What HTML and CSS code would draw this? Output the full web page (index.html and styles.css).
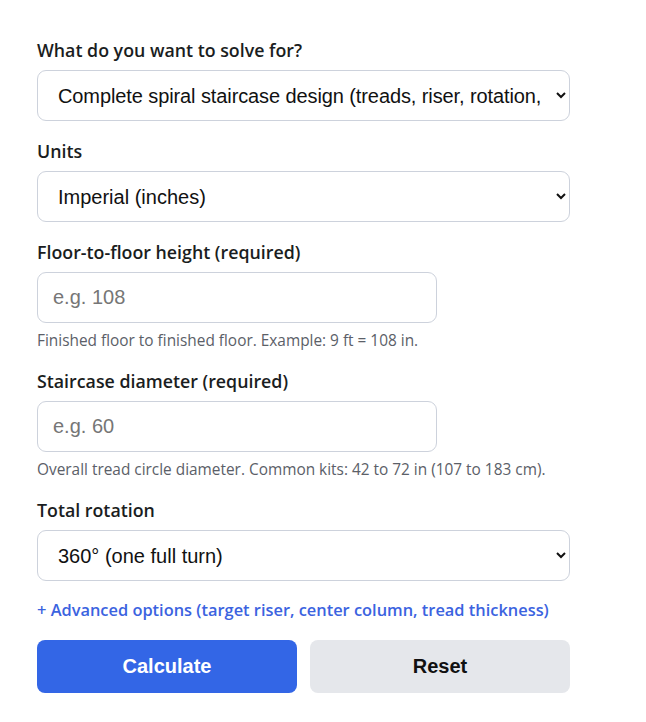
FILE: index.html
```html
<!DOCTYPE html>
<html lang="en">
<head>
<meta charset="utf-8">
<title>Spiral Staircase Calculator</title>
<link rel="stylesheet" href="styles.css">
</head>
<body>
<form class="calc" onsubmit="return false">
  <div class="field">
    <label class="label" for="solve">What do you want to solve for?</label>
    <select id="solve" class="control select select-long">
      <option>Complete spiral staircase design (treads, riser, rotation, headroom)</option>
    </select>
  </div>
  <div class="field">
    <label class="label" for="units">Units</label>
    <select id="units" class="control select">
      <option>Imperial (inches)</option>
    </select>
  </div>
  <div class="field">
    <label class="label" for="height">Floor-to-floor height (required)</label>
    <input id="height" class="control input" type="text" placeholder="e.g. 108">
    <p class="hint">Finished floor to finished floor. Example: 9 ft = 108 in.</p>
  </div>
  <div class="field">
    <label class="label" for="diameter">Staircase diameter (required)</label>
    <input id="diameter" class="control input" type="text" placeholder="e.g. 60">
    <p class="hint">Overall tread circle diameter. Common kits: 42 to 72 in (107 to 183 cm).</p>
  </div>
  <div class="field">
    <label class="label" for="rotation">Total rotation</label>
    <select id="rotation" class="control select">
      <option>360° (one full turn)</option>
    </select>
  </div>
  <a class="advanced" href="#">+ Advanced options (target riser, center column, tread thickness)</a>
  <div class="actions">
    <button class="btn btn-primary" type="button">Calculate</button>
    <button class="btn btn-secondary" type="reset">Reset</button>
  </div>
</form>
</body>
</html>
```
FILE: styles.css
```css
html, body {
  margin: 0;
  background: #ffffff;
}

body {
  font-family: "Open Sans", "Noto Sans", sans-serif;
  color: #1f2328;
}

.calc {
  width: 533px;
  padding: 38px 0 0 37px;
  display: flex;
  flex-direction: column;
}

.field {
  display: flex;
  flex-direction: column;
  margin-bottom: 18px;
}

.label {
  font-size: 17.8px;
  font-weight: 600;
  line-height: 24px;
  color: #1a1d21;
  margin-bottom: 8px;
}

.control {
  box-sizing: border-box;
  height: 51px;
  border: 1px solid #cdd2dc;
  border-radius: 9px;
  background: #ffffff;
  font-family: "Liberation Sans", Arial, sans-serif;
  font-size: 20px;
  color: #111111;
  padding: 0 15px;
}

.select {
  width: 533px;
  padding-left: 16px;
  padding-right: 12px;
}

/* long option text: tighten slightly so the trailing comma stays visible */
.select-long {
  letter-spacing: -0.1px;
}

.input {
  width: 400px;
}

.input::placeholder {
  color: #767676;
}

.hint {
  margin: 8px 0 0;
  font-size: 15.4px;
  line-height: 20px;
  color: #5b6068;
}

.advanced {
  font-size: 16.4px;
  font-weight: 600;
  line-height: 20px;
  color: #3b63e0;
  text-decoration: none;
  margin-top: 1px;
}

.actions {
  display: grid;
  grid-template-columns: 1fr 1fr;
  gap: 13px;
  margin-top: 20px;
}

.btn {
  height: 53px;
  border: none;
  border-radius: 8px;
  font-family: "Liberation Sans", Arial, sans-serif;
  font-size: 20px;
  font-weight: 700;
}

.btn-primary {
  background: #3366e6;
  color: #ffffff;
}

.btn-secondary {
  background: #e5e7eb;
  color: #111111;
}
```
